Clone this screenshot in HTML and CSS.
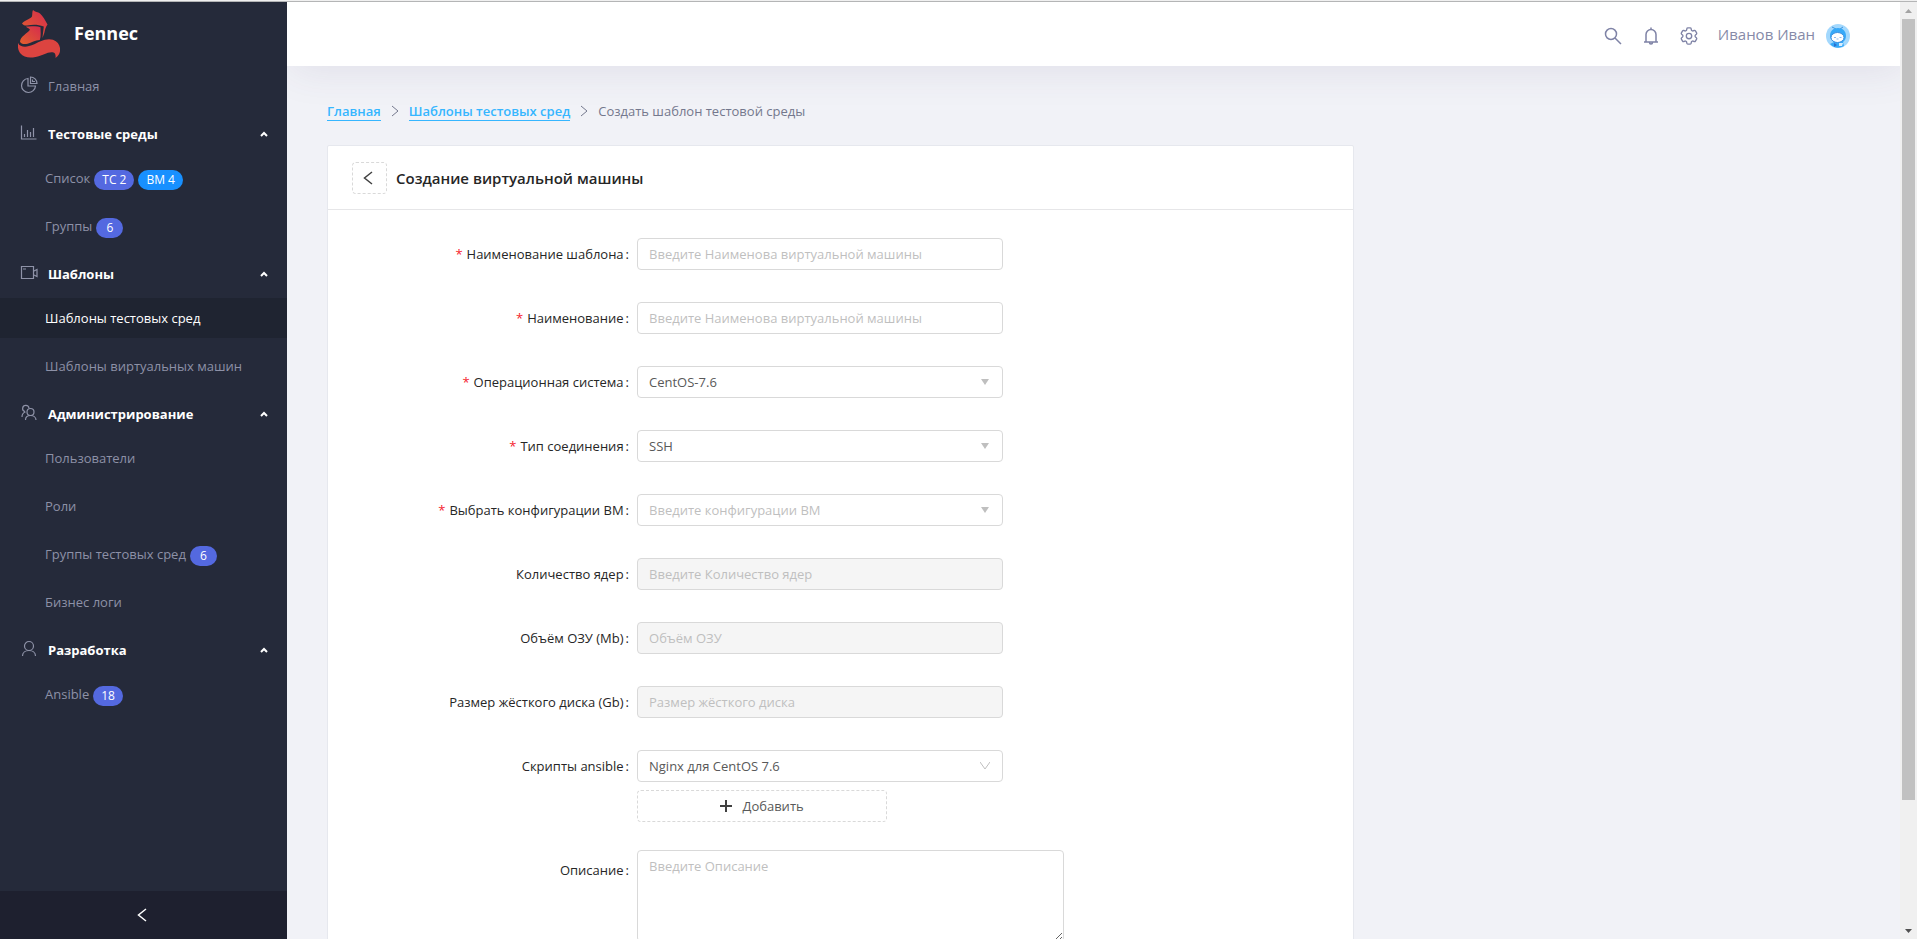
FILE: index.html
```html
<!DOCTYPE html>
<html lang="ru">
<head>
<meta charset="utf-8">
<title>Fennec</title>
<link rel="stylesheet" href="styles.css">
</head>
<body>
<div class="app">
  <aside class="sidebar">
    <a class="brand" href="#">
      <svg class="brand-logo" viewBox="0 0 42 48" aria-hidden="true">
        <defs>
          <linearGradient id="fox" x1="0" y1="1" x2="1" y2="0">
            <stop offset="0" stop-color="#e2602d"/>
            <stop offset="1" stop-color="#d62c4d"/>
          </linearGradient>
        </defs>
        <path fill="url(#fox)" d="M15 0C17 2 20 2 22 3.500 25 6 27 10 29.500 14.500 27.500 17 27 20 26.300 23L24.500 28C24.800 24 25.500 20 25.800 16.500 20 14.500 15 14.500 9 15.500 6.500 15.700 5 14.800 4 13.500 7 10 12 9.500 14 6.500 14.500 4 14 2 15 0z"/>
        <path fill="url(#fox)" d="M8 16.500C13 17 18 15.500 22.500 17.200 22.500 21 23.300 26 21.800 30 17 30 13.500 32.500 9.500 33.800 6 34.500 3 34 2 31.800 2.500 26 9 24 12 19.800 11 18 9 18 8 16.500z"/>
        <path fill="#dc4440" d="M0 33c2 4.500 9 4.500 15 1.800 6-2.800 13-7.300 20-5 7 2.500 8.500 9.700 6 14.500-.8 1.300-2 2.500-3.500 3.700.3-2.500 0-4.800-2-5.500-5-1.500-10.500 3-18 4.500-6 1.200-12 .5-15-3.500C.2 41-.5 36.500 0 33z"/>
      </svg>
      <span>Fennec</span>
    </a>
    <nav class="menu">
      <a class="menu-title menu-home" href="#">
        <svg class="menu-icon" viewBox="0 0 18 18"><path d="M8 2.500A7 7 0 1 0 15.500 10H8zM10.500 1v6.500H17A6.500 6.500 0 0 0 10.500 1zM12.500 3.500v2h2.500"/></svg>
        <span>Главная</span>
      </a>
      <section class="menu-group">
        <button class="menu-title" type="button">
          <svg class="menu-icon" viewBox="0 0 18 18"><path d="M1.500 1.500v13.500h15M4.500 13v-3M7.500 13V6M10.500 13V8M13.500 13V4"/></svg>
          <span>Тестовые среды</span>
          <svg class="menu-caret" viewBox="0 0 8 6"><path d="M1 5l3-3 3 3"/></svg>
        </button>
        <a class="menu-item" href="#">Список <span class="tag">ТС 2</span> <span class="tag tag-blue">ВМ 4</span></a>
        <a class="menu-item" href="#">Группы <span class="tag">6</span></a>
      </section>
      <section class="menu-group">
        <button class="menu-title" type="button">
          <svg class="menu-icon" viewBox="0 0 18 18"><path d="M1.500 2.500h12v12h-12zM3 5h3M14 7l3-1.500v7L14 11"/></svg>
          <span>Шаблоны</span>
          <svg class="menu-caret" viewBox="0 0 8 6"><path d="M1 5l3-3 3 3"/></svg>
        </button>
        <a class="menu-item menu-item-active" href="#">Шаблоны тестовых сред</a>
        <a class="menu-item" href="#">Шаблоны виртуальных машин</a>
      </section>
      <section class="menu-group">
        <button class="menu-title" type="button">
          <svg class="menu-icon" viewBox="0 0 18 18"><circle cx="10.500" cy="8" r="3.500"/><path d="M5.500 16c0-3 2.300-4.500 5-4.500s5.500 1.500 5.500 4.500M9 4.200A3.200 3.200 0 1 0 5 7.600M5.500 8C3.500 8.500 2 10.500 2 13"/></svg>
          <span>Администрирование</span>
          <svg class="menu-caret" viewBox="0 0 8 6"><path d="M1 5l3-3 3 3"/></svg>
        </button>
        <a class="menu-item" href="#">Пользователи</a>
        <a class="menu-item" href="#">Роли</a>
        <a class="menu-item" href="#">Группы тестовых сред <span class="tag">6</span></a>
        <a class="menu-item" href="#">Бизнес логи</a>
      </section>
      <section class="menu-group">
        <button class="menu-title" type="button">
          <svg class="menu-icon" viewBox="0 0 18 18"><circle cx="9" cy="6" r="4.500"/><path d="M2.500 16c0-3.500 3-5.500 6.500-5.500s6.500 2 6.500 5.500"/></svg>
          <span>Разработка</span>
          <svg class="menu-caret" viewBox="0 0 8 6"><path d="M1 5l3-3 3 3"/></svg>
        </button>
        <a class="menu-item" href="#">Ansible <span class="tag">18</span></a>
      </section>
    </nav>
    <button class="collapse" type="button" aria-label="Свернуть меню">
      <svg viewBox="0 0 10 14"><path d="M9 1L1.500 7 9 13"/></svg>
    </button>
  </aside>

  <div class="page">
    <header class="topbar">
      <button class="icon-button" type="button" aria-label="Поиск">
        <svg viewBox="0 0 18 18"><circle cx="7" cy="7" r="5.500"/><path d="M11 11l6 6"/></svg>
      </button>
      <button class="icon-button" type="button" aria-label="Уведомления">
        <svg viewBox="0 0 18 18"><path d="M2 15h14M4 15V7.500a5 5 0 0 1 10 0V15M9 .500v2M7.500 15.500a1.500 1.500 0 0 0 3 0"/></svg>
      </button>
      <button class="icon-button" type="button" aria-label="Настройки">
        <svg viewBox="2 2 20 20"><path d="M9.594 3.940c.09-.542.56-.94 1.110-.94h2.593c.55 0 1.020.398 1.110.94l.213 1.281c.063.374.313.686.645.87.074.04.147.083.22.127.325.196.72.257 1.075.124l1.217-.456a1.125 1.125 0 0 1 1.370.49l1.296 2.247a1.125 1.125 0 0 1-.26 1.431l-1.003.827c-.293.241-.438.613-.43.992a7.723 7.723 0 0 1 0 .255c-.008.378.137.75.43.991l1.004.827c.424.35.534.955.26 1.430l-1.298 2.247a1.125 1.125 0 0 1-1.369.491l-1.217-.456c-.355-.133-.75-.072-1.076.124a6.470 6.470 0 0 1-.22.128c-.331.183-.581.495-.644.869l-.213 1.281c-.09.543-.56.94-1.110.94h-2.594c-.55 0-1.019-.398-1.110-.94l-.213-1.281c-.062-.374-.312-.686-.644-.87a6.520 6.520 0 0 1-.22-.127c-.325-.196-.72-.257-1.076-.124l-1.217.456a1.125 1.125 0 0 1-1.369-.49l-1.297-2.247a1.125 1.125 0 0 1 .26-1.431l1.004-.827c.292-.24.437-.613.43-.991a6.932 6.932 0 0 1 0-.255c.007-.38-.138-.751-.43-.992l-1.004-.827a1.125 1.125 0 0 1-.26-1.430l1.297-2.247a1.125 1.125 0 0 1 1.370-.491l1.216.456c.356.133.751.072 1.076-.124.072-.044.146-.086.22-.128.332-.183.582-.495.644-.869l.214-1.280Z"/><circle cx="12" cy="12" r="3"/></svg>
      </button>
      <a class="user" href="#">
        <span>Иванов Иван</span>
        <svg class="avatar" viewBox="0 0 24 24" aria-hidden="true">
          <circle cx="12" cy="12" r="12" fill="#a3d8fd"/>
          <path d="M6 3l4 2M17 3l-3 2" stroke="#3f93dd" fill="none"/>
          <path fill="#36a9f8" d="M12 4c5 0 8 3.500 8 8 0 3-1.500 5-3 6l1 4c-5 2.800-10 2.200-14-2l4-2c-2.500-1.500-4-3.500-4-6 0-4.500 3-8 8-8z"/>
          <ellipse cx="11.500" cy="13.500" rx="6.500" ry="5" fill="#fff" stroke="#3c8fe0"/>
          <path d="M8 13.500h2M10.500 15h2M13.500 13.500h2" stroke="#8fb8ea" fill="none"/>
          <path d="M8 19l3 2-3 2z" fill="#2b6fd0"/>
          <path d="M13 19h4l-1 3h-3z" fill="#d8edfd"/>
        </svg>
      </a>
    </header>

    <main class="content">
      <nav class="breadcrumb" aria-label="Навигация">
        <a href="#">Главная</a>
        <svg viewBox="0 0 8 12"><path d="M1 1l6 5-6 5"/></svg>
        <a href="#">Шаблоны тестовых сред</a>
        <svg viewBox="0 0 8 12"><path d="M1 1l6 5-6 5"/></svg>
        <span>Создать шаблон тестовой среды</span>
      </nav>

      <section class="card">
        <div class="card-head">
          <button class="dashed back" type="button" aria-label="Назад">
            <svg viewBox="0 0 10 14"><path d="M9 1L1.500 7 9 13"/></svg>
          </button>
          <h1>Создание виртуальной машины</h1>
        </div>
        <form class="form">
          <div class="row">
            <label class="required" for="template">Наименование шаблона</label>
            <div class="field"><input class="control" id="template" type="text" placeholder="Введите Наименова виртуальной машины"></div>
          </div>
          <div class="row">
            <label class="required" for="name">Наименование</label>
            <div class="field"><input class="control" id="name" type="text" placeholder="Введите Наименова виртуальной машины"></div>
          </div>
          <div class="row">
            <label class="required" for="os">Операционная система</label>
            <div class="field select">
              <select class="control" id="os"><option>CentOS-7.6</option></select>
              <svg class="arrow" viewBox="0 0 10 10"><path d="M1 2h8L5 8z"/></svg>
            </div>
          </div>
          <div class="row">
            <label class="required" for="link">Тип соединения</label>
            <div class="field select">
              <select class="control" id="link"><option>SSH</option></select>
              <svg class="arrow" viewBox="0 0 10 10"><path d="M1 2h8L5 8z"/></svg>
            </div>
          </div>
          <div class="row">
            <label class="required" for="config">Выбрать конфигурации ВМ</label>
            <div class="field select">
              <select class="control control-empty" id="config"><option>Введите конфигурации ВМ</option></select>
              <svg class="arrow" viewBox="0 0 10 10"><path d="M1 2h8L5 8z"/></svg>
            </div>
          </div>
          <div class="row">
            <label for="cores">Количество ядер</label>
            <div class="field"><input class="control" id="cores" type="text" placeholder="Введите Количество ядер" disabled></div>
          </div>
          <div class="row">
            <label for="ram">Объём ОЗУ (Mb)</label>
            <div class="field"><input class="control" id="ram" type="text" placeholder="Объём ОЗУ" disabled></div>
          </div>
          <div class="row">
            <label for="disk">Размер жёсткого диска (Gb)</label>
            <div class="field"><input class="control" id="disk" type="text" placeholder="Размер жёсткого диска" disabled></div>
          </div>
          <div class="row row-tight">
            <label for="ansible">Скрипты ansible</label>
            <div class="field select">
              <select class="control" id="ansible"><option>Nginx для CentOS 7.6</option></select>
              <svg class="arrow arrow-line" viewBox="0 0 10 10"><path d="M0 1l5 7 5-7"/></svg>
            </div>
          </div>
          <div class="row">
            <div class="field field-add">
              <button class="dashed add" type="button">
                <svg viewBox="0 0 12 12"><path d="M6 0v12M0 6h12"/></svg>
                <span>Добавить</span>
              </button>
            </div>
          </div>
          <div class="row">
            <label for="about">Описание</label>
            <div class="field field-wide"><textarea class="control" id="about" rows="4" placeholder="Введите Описание"></textarea></div>
          </div>
        </form>
      </section>
    </main>
  </div>

  <div class="scrollbar" aria-hidden="true">
    <svg viewBox="0 0 17 17"><path fill="#a3a3a3" d="M5 11h7L8.500 7z"/></svg>
    <div class="scroll-track"><div class="scroll-thumb"></div></div>
    <svg viewBox="0 0 17 17"><path fill="#505050" d="M5 7h7l-3.500 4z"/></svg>
  </div>
</div>
</body>
</html>
```

FILE: styles.css
```css
* {
  box-sizing: border-box;
}

body {
  margin: 0;
  font: 13px/20px "Open Sans", "Noto Sans", sans-serif;
  color: #595959;
  background: #f1f2f7;
}

a {
  color: inherit;
  text-decoration: none;
}

button {
  margin: 0;
  padding: 0;
  border: 0;
  background: none;
  font: inherit;
  color: inherit;
}

svg {
  display: block;
  flex: none;
  fill: none;
  stroke: none;
}

.app {
  display: flex;
  height: 100vh;
  overflow: hidden;
  border-top: 1px solid #f0f0f0;
  box-shadow: inset 0 1px #b4b5b6;
  padding-top: 1px;
}

/* Sidebar */

.sidebar {
  position: relative;
  z-index: 2;
  display: flex;
  flex: none;
  flex-direction: column;
  width: 287px;
  background: #252a3a;
  color: #8d91a7;
}

.brand {
  display: flex;
  align-items: flex-start;
  gap: 14px;
  height: 64px;
  padding: 8px 18px;
  color: #fff;
  font-size: 18px;
  font-weight: 700;
  line-height: 46px;
}

.brand-logo {
  width: 42px;
  height: 48px;
}

.menu {
  flex: 1;
  display: flex;
  flex-direction: column;
  gap: 8px;
}

.menu-group {
  display: flex;
  flex-direction: column;
  gap: 8px;
}

.menu-title {
  display: flex;
  align-items: center;
  gap: 10px;
  width: 100%;
  height: 40px;
  padding: 0 19px 0 20px;
  color: #fff;
  font-weight: 700;
  text-align: left;
}

.menu-home {
  color: inherit;
  font-weight: 400;
}

.menu-title + .menu-item {
  margin-top: -4px;
}

.menu-icon {
  width: 18px;
  height: 18px;
  margin-bottom: 2px;
  stroke: #8f93a8;
  stroke-width: 1.2;
}

.menu-caret {
  width: 8px;
  height: 6px;
  margin-left: auto;
  stroke: #fff;
  stroke-width: 2;
}

.menu-item {
  display: flex;
  align-items: center;
  gap: 4px;
  height: 40px;
  padding-left: 45px;
}

.menu-item-active {
  background: #1f2431;
  color: #fff;
}

.tag {
  height: 20px;
  margin-top: 4px;
  padding: 0 8px;
  border-radius: 10px;
  background: #5469e0;
  color: #fff;
  font-size: 12px;
  line-height: 20px;
  min-width: 27px;
  text-align: center;
}

.tag-blue {
  background: #1890ff;
}

.collapse {
  display: flex;
  align-items: center;
  justify-content: center;
  height: 48px;
  padding-right: 4px;
  background: #1e202f;
}

.collapse svg {
  width: 10px;
  height: 14px;
  stroke: #fff;
  stroke-width: 1.5;
}

/* Page */

.page {
  display: flex;
  flex: 1;
  flex-direction: column;
  min-width: 0;
  overflow: hidden;
}

.topbar {
  display: flex;
  flex: none;
  align-items: center;
  justify-content: flex-end;
  gap: 20px;
  height: 64px;
  padding: 4px 50px 0 0;
  background: #fff;
  color: #868aa8;
  box-shadow: 4px 4px 40px rgba(82, 63, 105, 0.1);
}

.icon-button svg {
  width: 18px;
  height: 18px;
  stroke: #7f83a6;
  stroke-width: 1.5;
}

.user {
  display: flex;
  align-items: center;
  gap: 11px;
  font-size: 15px;
}

.user span {
  padding-bottom: 4px;
}

.avatar {
  width: 24px;
  height: 24px;
}

.content {
  padding: 35px 40px 0;
}

.breadcrumb {
  display: flex;
  align-items: center;
  gap: 10px;
  margin-bottom: 24px;
  color: #74788d;
}

.breadcrumb a {
  border-bottom: 1px solid #36b6ff;
  color: #36b6ff;
  font-weight: 600;
  line-height: 18px;
}

.breadcrumb svg {
  width: 8px;
  height: 12px;
  stroke: #74788d;
}

.card {
  width: 67%;
  border: 1px solid #e6e8ee;
  border-radius: 2px;
  background: #fff;
}

.card-head {
  display: flex;
  align-items: center;
  gap: 9px;
  height: 64px;
  padding: 0 24px;
  border-bottom: 1px solid #e6e6e8;
}

.card-head h1 {
  margin: 0;
  color: #262626;
  font-size: 15px;
  font-weight: 600;
}

.dashed {
  display: flex;
  align-items: center;
  justify-content: center;
  height: 32px;
  border: 1px dashed #d9d9d9;
  border-radius: 4px;
  background: #fff;
}

.dashed svg {
  stroke: #404040;
}

.back {
  width: 35px;
  padding-right: 3px;
}

.back svg {
  width: 10px;
  height: 14px;
  stroke-width: 1.5;
}

/* Form */

.form {
  padding: 24px;
}

.row {
  display: flex;
  margin-bottom: 24px;
  min-height: 40px;
}

.row-tight {
  margin-bottom: 0;
}

.row label {
  width: 29.17%;
  padding-right: 8px;
  color: #262626;
  line-height: 40px;
  text-align: right;
}

.row label::after {
  content: ":";
  margin-left: 2px;
}

.required::before {
  content: "*";
  margin-right: 4px;
  color: #f5222d;
}

.field {
  position: relative;
  width: 37.5%;
  padding: 4px 0;
}

.field-add {
  width: 25.6%;
  margin-left: 29.17%;
}

.field-wide {
  width: 43.7%;
}

.control {
  display: block;
  width: 100%;
  height: 32px;
  margin: 0;
  padding: 0 11px;
  border: 1px solid #d9d9d9;
  border-radius: 4px;
  background: #fff;
  color: #595959;
  font: inherit;
  appearance: none;
}

.control::placeholder,
.control-empty {
  color: #bfbfbf;
  opacity: 1;
}

.control:disabled {
  background: #f5f5f5;
}

textarea.control {
  height: 92px;
  margin-top: -4px;
  padding: 5px 11px;
  resize: vertical;
}

.arrow {
  position: absolute;
  top: 15px;
  right: 13px;
  width: 10px;
  height: 10px;
  fill: #bfbfbf;
  pointer-events: none;
}

.arrow-line {
  fill: none;
  stroke: #bfbfbf;
}

.add {
  gap: 10px;
  width: 100%;
}

.add svg {
  width: 12px;
  height: 12px;
  stroke-width: 2;
}

/* Scrollbar */

.scrollbar {
  display: flex;
  flex: none;
  flex-direction: column;
  width: 17px;
  background: #f0f0f0;
}

.scrollbar svg {
  width: 17px;
  height: 17px;
}

.scroll-track {
  flex: 1;
  padding: 0 2px;
}

.scroll-thumb {
  height: 86.5%;
  background: #c1c1c1;
}
```
